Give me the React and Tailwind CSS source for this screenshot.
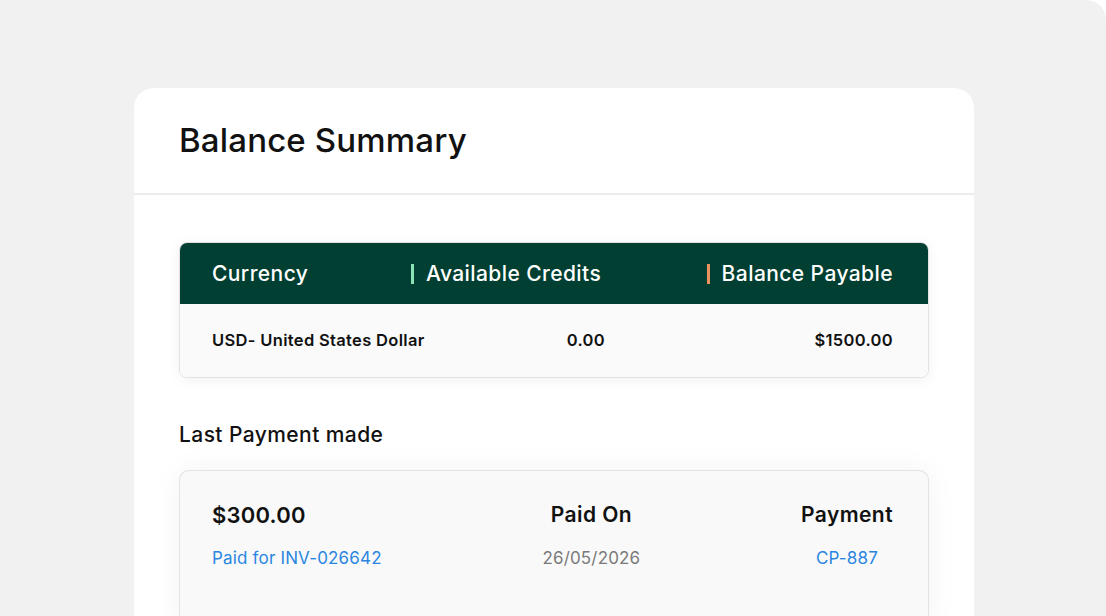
import React from "react";

const font = { fontFamily: "Inter, 'Noto Sans', sans-serif" };

function BalanceTable() {
  return (
    <div className="rounded-[8px] border border-[#e2e2e2] overflow-hidden shadow-[0_2px_14px_rgba(0,0,0,0.06)]">
      <div className="flex items-center h-[61px] pl-[32px] pr-[35px] bg-[#003f32] text-white text-[21px] tracking-[0.02em] font-medium">
        <div className="w-[199px]">Currency</div>
        <div className="w-[194px] flex items-center gap-[12px]">
          <span className="w-[3px] h-[20px] bg-[#8be3b5]" />
          <span>Available Credits</span>
        </div>
        <div className="flex-1 flex items-center justify-end gap-[12px]">
          <span className="w-[3px] h-[20px] bg-[#e9925d]" />
          <span>Balance Payable</span>
        </div>
      </div>
      <div className="flex items-center h-[73px] pl-[32px] pr-[35px] bg-[#fafafa] text-[16.5px] tracking-[0.02em] font-semibold text-[#111]">
        <div className="w-[199px] whitespace-nowrap">USD- United States Dollar</div>
        <div className="w-[194px] text-right">0.00</div>
        <div className="flex-1 text-right">$1500.00</div>
      </div>
    </div>
  );
}

function LastPayment() {
  return (
    <div className="rounded-t-[10px] border border-b-0 border-[#e3e3e3] bg-[#f9f9f9] pl-[32px] pr-[35px] pt-[29px] h-[160px] shadow-[0_0_30px_rgba(0,0,0,0.05)]">
      <div className="flex justify-between">
        <div className="flex flex-col items-start gap-[16px]">
          <div className="text-[22px] leading-[30px] tracking-[0.01em] font-semibold text-[#111]">$300.00</div>
          <div className="text-[17px] leading-[24px] tracking-[0.01em] text-[#2a86e0]">Paid for INV-026642</div>
        </div>
        <div className="flex flex-col items-center gap-[16px]">
          <div className="text-[21px] leading-[30px] tracking-[0.02em] font-semibold text-[#111]">Paid On</div>
          <div className="text-[17px] leading-[24px] tracking-[0.01em] text-[#7a7a7a]">26/05/2026</div>
        </div>
        <div className="flex flex-col items-center gap-[16px]">
          <div className="text-[21px] leading-[30px] tracking-[0.02em] font-semibold text-[#111]">Payment</div>
          <div className="text-[17px] leading-[24px] tracking-[0.01em] text-[#2a86e0]">CP-887</div>
        </div>
      </div>
    </div>
  );
}

export default function App() {
  return (
    <div className="w-[1106px] h-[616px] bg-white" style={font}>
      <div className="w-full h-full bg-[#f1f1f1] rounded-tr-[20px] overflow-hidden pt-[88px] pl-[134px]">
        <div className="w-[840px] h-full bg-white rounded-t-[20px]">
          <div className="h-[107px] pl-[45px] pt-[30px] border-b-2 border-[#ececec]">
            <h1 className="text-[33px] leading-[44px] tracking-[0.005em] font-medium text-[#111]">Balance Summary</h1>
          </div>
          <div className="px-[45px] pt-[47px]">
            <BalanceTable />
            <div className="mt-[43px] text-[21px] leading-[28px] tracking-[0.02em] font-medium text-[#111]">Last Payment made</div>
            <div className="mt-[21px]">
              <LastPayment />
            </div>
          </div>
        </div>
      </div>
    </div>
  );
}
